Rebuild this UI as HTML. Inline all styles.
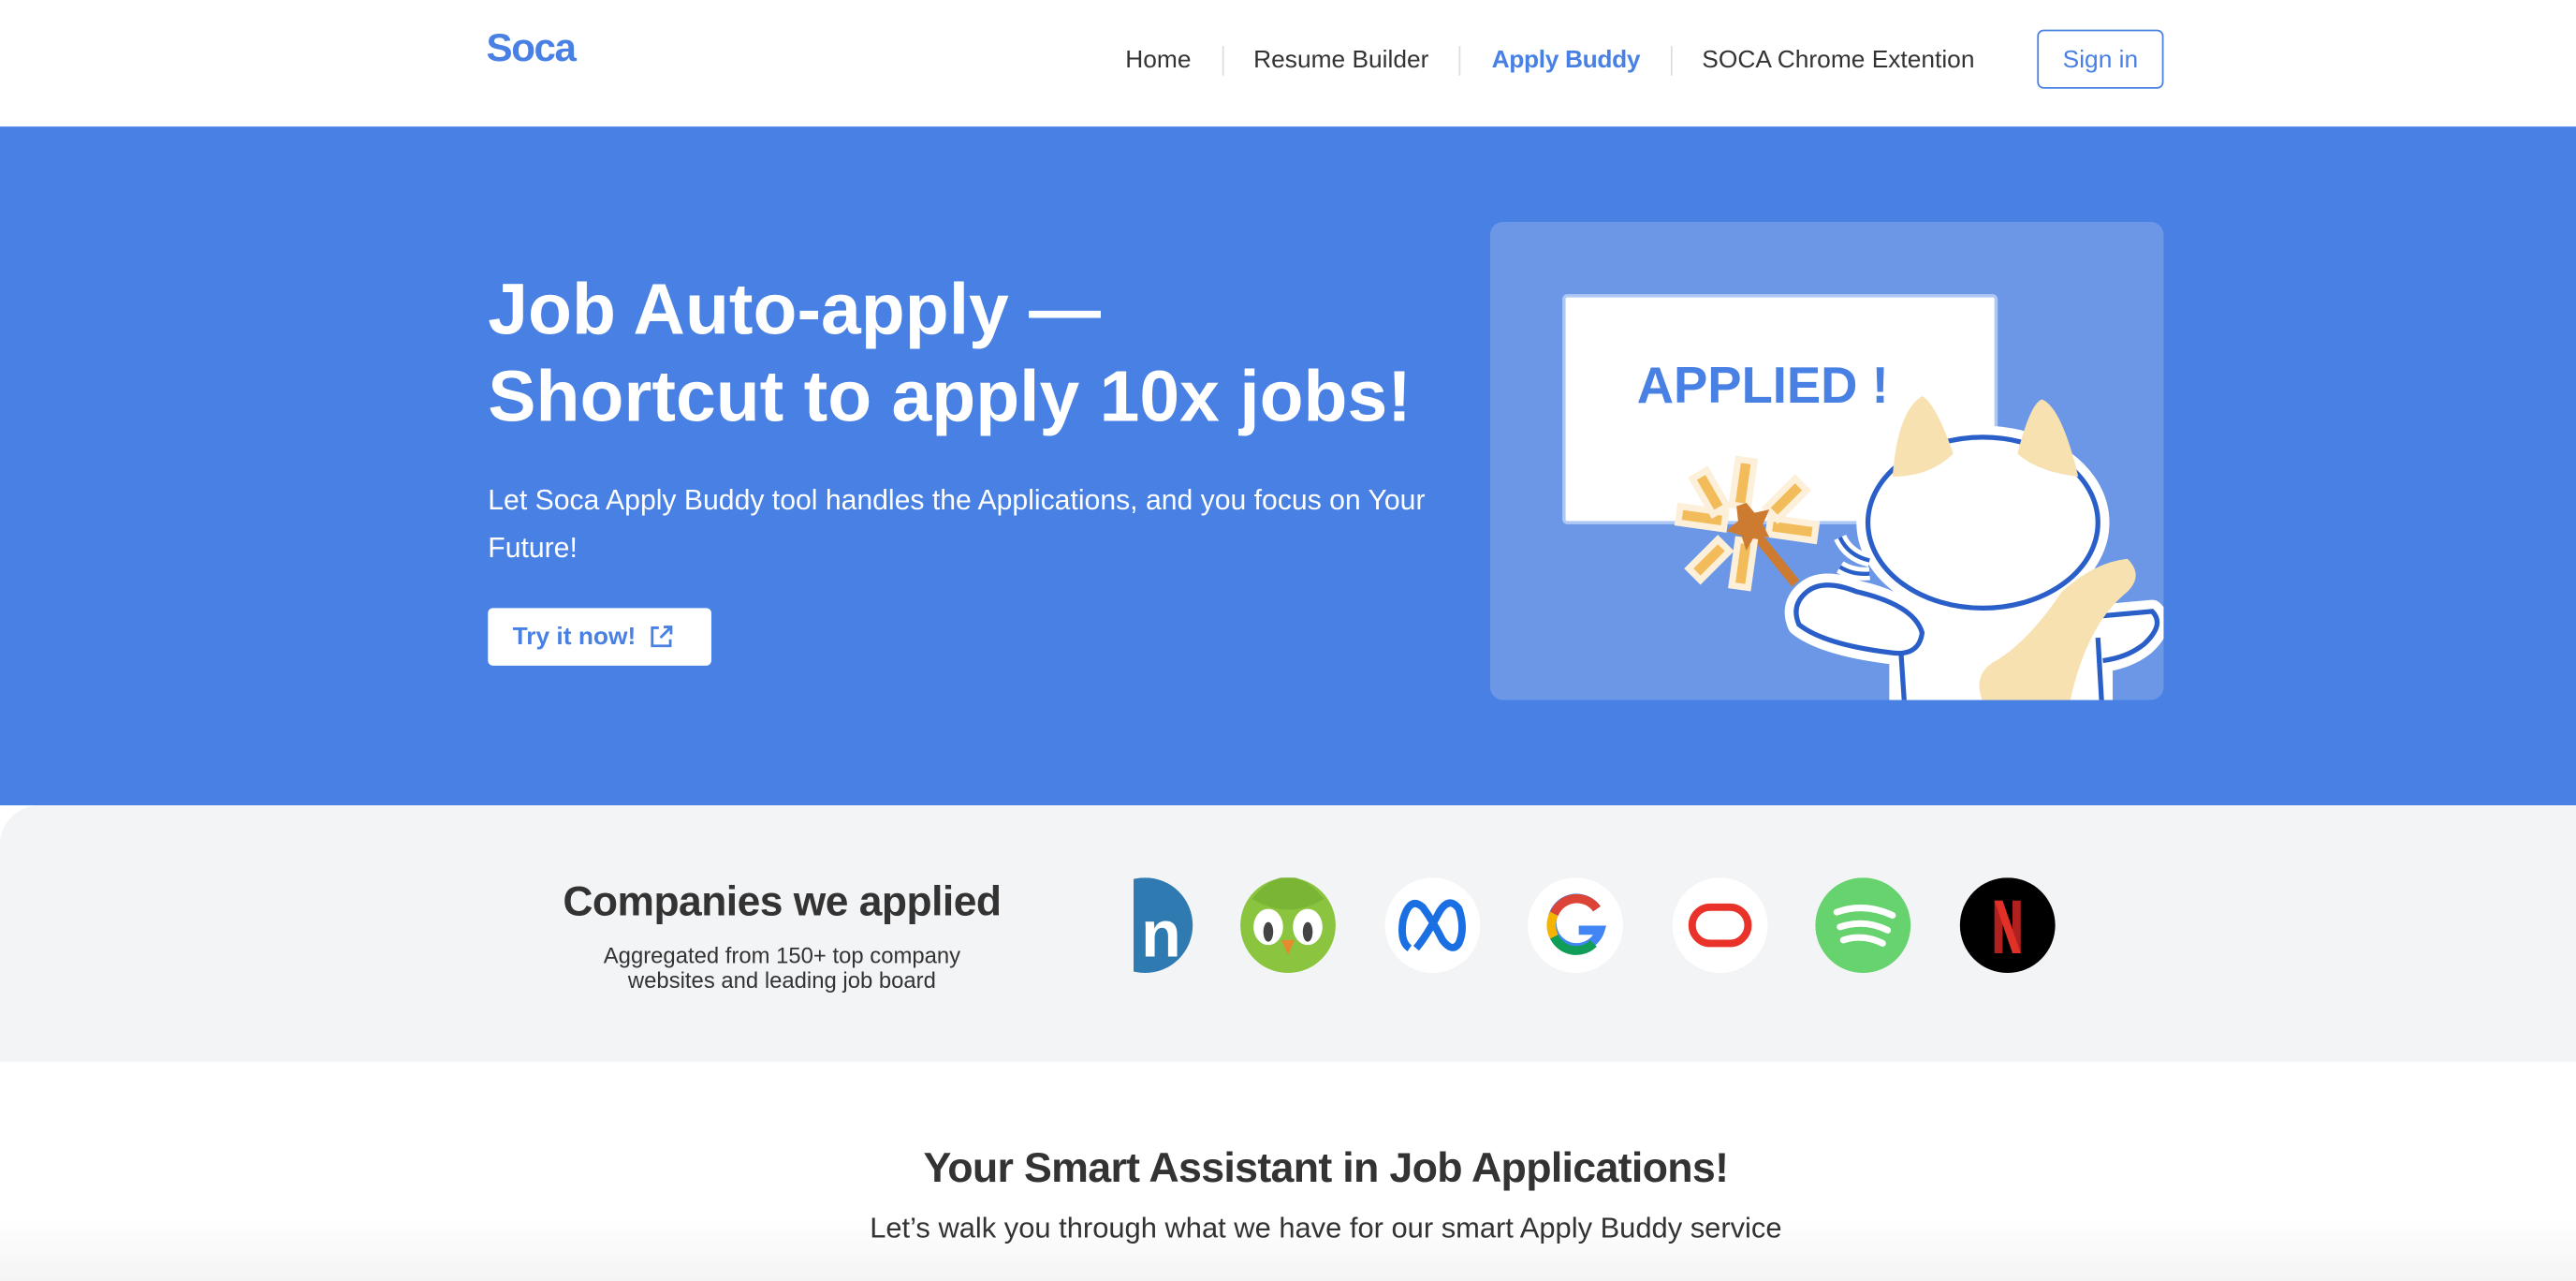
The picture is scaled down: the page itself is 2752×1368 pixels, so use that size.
<!DOCTYPE html>
<html><head><meta charset="utf-8">
<style>
*{margin:0;padding:0;box-sizing:border-box}
html,body{width:2752px;height:1368px;overflow:hidden;background:#fff}
#w{width:1568px;height:780px;transform:scale(1.75510);transform-origin:0 0;position:relative;font-family:"Liberation Sans",sans-serif;color:#333}
.a{position:absolute;white-space:nowrap}
.nav{font-size:15px;color:#333;top:28px}
.sep{position:absolute;top:28px;width:1px;height:18px;background:#ddd}
</style></head><body><div id="w">
<div class="a" style="left:296px;top:16px;font-size:24px;font-weight:bold;color:#4880E3;letter-spacing:-0.8px">Soca</div>
<div class="a nav" style="left:685px">Home</div>
<div class="sep" style="left:744px"></div>
<div class="a nav" style="left:763px">Resume Builder</div>
<div class="sep" style="left:888px"></div>
<div class="a nav" style="left:908px;color:#4880E3;font-weight:bold;letter-spacing:-0.2px">Apply Buddy</div>
<div class="sep" style="left:1017px"></div>
<div class="a nav" style="left:1036px">SOCA Chrome Extention</div>
<div class="a" style="left:1240px;top:18px;width:77px;height:36px;border:1px solid #4880E3;border-radius:4px;color:#4880E3;font-size:15px;text-align:center;line-height:36px">Sign in</div>

<div class="a" style="left:0;top:77px;width:1568px;height:413px;background:#4880E3"></div>
<div class="a" style="left:297px;top:162px;font-size:43.8px;font-weight:bold;color:#fff;line-height:53px">Job Auto-apply —<br>Shortcut to apply 10x jobs!</div>
<div class="a" style="left:297px;top:290px;font-size:17.2px;color:#fff;line-height:29px">Let Soca Apply Buddy tool handles the Applications, and you focus on Your<br>Future!</div>
<div class="a" style="left:297px;top:370px;width:136px;height:35px;background:#fff;border-radius:3px;color:#4880E3;font-size:15px;font-weight:bold;line-height:35px;padding-left:15px">Try it now!
<svg style="position:absolute;left:98px;top:10px" width="15" height="15" viewBox="0 0 15 15" fill="none" stroke="#4880E3" stroke-width="1.6"><path d="M6 2H2v11h11V9"/><path d="M9 1.5h4.5V6M13.5 1.5L7 8"/></svg></div>

<svg class="a" style="left:907px;top:135px" width="410" height="291" viewBox="907 135 410 291">
<defs><clipPath id="c"><rect x="907" y="135" width="410" height="291" rx="8"/></clipPath></defs>
<rect x="907" y="135" width="410" height="291" rx="8" fill="#6B97E6"/>
<g clip-path="url(#c)">
<rect x="952" y="180" width="263" height="138" rx="2" fill="#fff" stroke="#AFC8F3" stroke-width="2"/>
<text x="1073" y="245" text-anchor="middle" font-family="Liberation Sans" font-weight="bold" font-size="31" fill="#4880E3">APPLIED !</text>
<!-- white outline layer -->
<g fill="#fff" stroke="#fff" stroke-width="14" stroke-linejoin="round">
<ellipse cx="1207" cy="318" rx="70" ry="52"/>
<path d="M1100 360 Q1110 352 1130 360 Q1165 368 1170 385 Q1168 400 1150 397 Q1110 392 1095 380 Q1090 368 1100 360Z"/>
<path d="M1277 375 L1310 372 Q1318 380 1305 392 Q1295 400 1280 402Z"/>
<rect x="1157" y="365" width="122" height="70"/>
<path d="M1120 327 Q1125 338 1138 341 M1120 345 Q1128 350 1138 349" fill="none" stroke-width="8"/>
</g>
<rect x="1157" y="365" width="122" height="70" fill="#fff"/>
<path d="M1160 440 L1157 395 M1280 440 L1277 388" stroke="#2A5FC9" stroke-width="3" fill="none"/>
<ellipse cx="1207" cy="318" rx="70" ry="52" fill="#fff" stroke="#2A5FC9" stroke-width="3"/>
<path d="M1152 290 Q1155 250 1170 241 Q1178 245 1189 276 Q1175 290 1152 290Z" fill="#F8E1B0"/>
<path d="M1228 276 Q1236 245 1243 243 Q1255 248 1265 290 Q1240 287 1228 276Z" fill="#F8E1B0"/>
<path d="M1120 327 Q1125 338 1138 341 M1120 345 Q1128 350 1138 349" stroke="#2A5FC9" stroke-width="2.5" fill="none"/>
<path d="M1100 360 Q1110 352 1130 360 Q1165 368 1170 385 Q1168 400 1150 397 Q1110 392 1095 380 Q1090 368 1100 360Z" fill="#fff" stroke="#2A5FC9" stroke-width="3"/>
<path d="M1277 375 L1310 372 Q1318 380 1305 392 Q1295 400 1280 402" fill="#fff" stroke="#2A5FC9" stroke-width="3"/>
<path d="M1207 427 Q1200 410 1215 402 Q1235 390 1255 360 Q1275 342 1295 340 Q1305 350 1295 360 Q1270 380 1260 427Z" fill="#F8E1B0"/>
<path d="M1063 318 L1093 355" stroke="#CD7B30" stroke-width="6"/>
<g fill="#F2BC5B" stroke="#FDF0DA" stroke-width="4">
<rect x="1056" y="280" width="10" height="28" transform="rotate(8 1061 294)"/>
<rect x="1056" y="329" width="10" height="28" transform="rotate(8 1061 343)"/>
<rect x="1022" y="310" width="28" height="10" transform="rotate(8 1036 315)"/>
<rect x="1077" y="317" width="28" height="10" transform="rotate(8 1091 322)"/>
<rect x="1036" y="287" width="10" height="25" transform="rotate(-30 1041 300)"/>
<rect x="1082" y="291" width="10" height="25" transform="rotate(45 1087 304)"/>
<rect x="1035" y="328" width="10" height="25" transform="rotate(45 1040 341)"/>
</g>
<path d="M1063 306 L1068 312 L1077 310 L1073 319 L1077 327 L1068 326 L1063 335 L1060 326 L1051 323 L1058 317 L1057 308 Z" fill="#CD7B30"/>
</g>
</svg>

<div class="a" style="left:0;top:490px;width:1568px;height:156px;background:#F3F4F6;border-top-left-radius:24px"></div>
<div class="a" style="left:476px;top:535px;transform:translateX(-50%);font-size:25.3px;font-weight:bold;color:#333;letter-spacing:-0.3px">Companies we applied</div>
<div class="a" style="left:476px;top:574px;transform:translateX(-50%);font-size:13.6px;line-height:15px;text-align:center;color:#333">Aggregated from 150+ top company<br>websites and leading job board</div>
<svg class="a" style="left:690px;top:534px" width="570" height="60" viewBox="690 534 570 60">
<clipPath id="l"><rect x="690" y="530" width="600" height="70"/></clipPath>
<g clip-path="url(#l)">
<circle cx="697" cy="563" r="29" fill="#2F7AB1"/>
<text x="719" y="582" text-anchor="end" font-family="Liberation Sans" font-weight="bold" font-size="40" fill="#fff">n</text>
</g>
<circle cx="784" cy="563" r="29" fill="#8BC540"/>
<path d="M762 547 Q784 520 806 547 Q784 560 762 547Z" fill="#7AB536"/>
<ellipse cx="772" cy="564" rx="9" ry="11" fill="#fff"/><ellipse cx="796" cy="564" rx="9" ry="11" fill="#fff"/>
<ellipse cx="772" cy="567" rx="3" ry="6" fill="#444"/><ellipse cx="796" cy="567" rx="3" ry="6" fill="#444"/>
<path d="M780 572 L788 572 L784 581Z" fill="#E68A2E"/>
<circle cx="872" cy="563" r="29" fill="#fff"/>
<path d="M858 577 Q852 573 854 560 Q858 545 866 552 Q872 560 878 572 Q884 580 888 574 Q892 565 888 553 Q882 545 876 555 Q868 570 862 577" fill="none" stroke="#1A6FE3" stroke-width="4.5"/>
<circle cx="959" cy="563" r="29" fill="#fff"/>
<path d="M972 553 A15 15 0 1 0 974 566 L961 566" fill="none" stroke="#4285F4" stroke-width="5.5"/>
<path d="M972 553 A15 15 0 0 0 946 556" fill="none" stroke="#DB4437" stroke-width="5.5"/>
<path d="M946 556 A15 15 0 0 0 946 570" fill="none" stroke="#F4B400" stroke-width="5.5"/>
<path d="M946 570 A15 15 0 0 0 970 574" fill="none" stroke="#0F9D58" stroke-width="5.5"/>
<circle cx="1047" cy="563" r="29" fill="#fff"/>
<rect x="1030" y="552" width="34" height="22" rx="11" fill="none" stroke="#E8322A" stroke-width="4.5"/>
<circle cx="1134" cy="563" r="29" fill="#66D36E"/>
<path d="M1118 555 Q1135 549 1152 557 M1120 564 Q1135 559 1149 566 M1122 572 Q1134 568 1146 574" fill="none" stroke="#fff" stroke-width="4" stroke-linecap="round"/>
<circle cx="1222" cy="563" r="29" fill="#000"/>
<path d="M1214 548h5v32h-5z M1225 548h5v32h-5z" fill="#B0201F"/><path d="M1214 548h5l11 32h-5z" fill="#E03028"/>
</svg>

<div class="a" style="left:0;top:646px;width:1568px;height:134px;background:linear-gradient(#fff 0,#fff 95px,#f4f4f4 134px)"></div>
<div class="a" style="left:807px;top:697px;transform:translateX(-50%);font-size:25.5px;font-weight:bold;color:#333;letter-spacing:-0.4px">Your Smart Assistant in Job Applications!</div>
<div class="a" style="left:807px;top:737px;transform:translateX(-50%);font-size:17.6px;color:#333">Let’s walk you through what we have for our smart Apply Buddy service</div>
</div></body></html>
